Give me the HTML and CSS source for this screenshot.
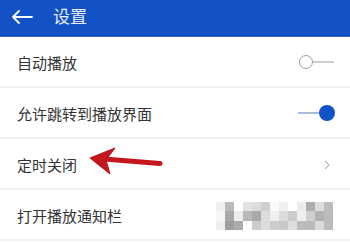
FILE: index.html
```html
<!DOCTYPE html>
<html lang="zh">
<head>
<meta charset="utf-8">
<link rel="stylesheet" href="styles.css">
</head>
<body>
<div class="page">
  <header class="topbar">
    <svg class="back" width="22" height="14" viewBox="0 0 22 14">
      <path d="M21 7H2M8 1L2 7l6 6" fill="none" stroke="#fff" stroke-width="1.8" stroke-linecap="round" stroke-linejoin="round"/>
    </svg>
    <span class="title">设置</span>
  </header>
  <div class="row">
    <span class="label">自动播放</span>
    <span class="toggle off"><span class="knob"></span><span class="track"></span></span>
  </div>
  <div class="row">
    <span class="label">允许跳转到播放界面</span>
    <span class="toggle on"><span class="track"></span><span class="knob"></span></span>
  </div>
  <div class="row">
    <span class="label">定时关闭</span>
    <svg class="chev" width="6" height="10" viewBox="0 0 6 10"><path d="M1 1l4 4-4 4" fill="none" stroke="#bdbdbd" stroke-width="1.2"/></svg>
  </div>
  <div class="row">
    <span class="label">打开播放通知栏</span>
    <div class="mosaic">
      <i style="background:#f0f0f0"></i><i style="background:#b9b9b9"></i><i style="background:#fff"></i><i style="background:#e2e2e2"></i><i style="background:#dcdcdc"></i><i style="background:#cfcfcf"></i><i style="background:#fafafa"></i><i style="background:#f0f0f0"></i><i style="background:#fff"></i><i style="background:#ececec"></i><i style="background:#adadad"></i><i style="background:#dedede"></i><i style="background:#bdbdbd"></i>
      <i style="background:#f6f6f6"></i><i style="background:#a9a9a9"></i><i style="background:#ececec"></i><i style="background:#b8b8b8"></i><i style="background:#aaaaaa"></i><i style="background:#dddddd"></i><i style="background:#efefef"></i><i style="background:#dcdcdc"></i><i style="background:#cccccc"></i><i style="background:#eeeeee"></i><i style="background:#cfcfcf"></i><i style="background:#b2b2b2"></i><i style="background:#bbbbbb"></i>
      <i style="background:#eeeeee"></i><i style="background:#9e9e9e"></i><i style="background:#acacac"></i><i style="background:#fdfdfd"></i><i style="background:#cccccc"></i><i style="background:#dcdcdc"></i><i style="background:#cdcdcd"></i><i style="background:#c9c9c9"></i><i style="background:#dddddd"></i><i style="background:#bcbcbc"></i><i style="background:#bababa"></i><i style="background:#dadada"></i><i style="background:#bcbcbc"></i>
    </div>
  </div>
  <svg class="redarrow" width="80" height="34" viewBox="85 145 80 34">
    <path d="M160 163.5L104 159" fill="none" stroke="#c4161c" stroke-width="5" stroke-linecap="round"/>
    <path d="M90 158L115 148L106 160L110 174Z" fill="#c4161c" stroke="#b51218" stroke-width="1" stroke-linejoin="round"/>
  </svg>
</div>
</body>
</html>
```
FILE: styles.css
```css
html, body {
  margin: 0;
  padding: 0;
  background: #fff;
}
.page {
  position: relative;
  width: 350px;
  height: 242px;
  overflow: hidden;
  font-family: "Noto Sans CJK SC", "Noto Sans", sans-serif;
}
.topbar {
  height: 36px;
  background: #1252c4;
  border-bottom: 1px solid #3a68b6;
  display: flex;
  align-items: center;
  padding-left: 11px;
  box-sizing: content-box;
}
.back {
  display: block;
  margin-right: 20px;
  margin-top: -3px;
}
.title {
  color: #e9effb;
  font-size: 17px;
  line-height: 20px;
  margin-top: -5px;
}
.row {
  height: 49px;
  border-bottom: 2px solid #f1f1f1;
  display: flex;
  align-items: center;
  justify-content: space-between;
  padding: 0 15px 0 17px;
  box-sizing: content-box;
}
.label {
  font-size: 15px;
  color: #333;
  line-height: 20px;
  margin-top: 3px;
}
.toggle {
  display: flex;
  align-items: center;
  width: 36px;
}
.toggle.off .knob {
  width: 12px;
  height: 12px;
  border: 1.5px solid #9e9e9e;
  border-radius: 50%;
  background: #fff;
  flex: none;
}
.toggle.off .track {
  flex: 1;
  height: 2px;
  background: #cfcfcf;
  margin-right: 1px;
}
.toggle.on .track {
  flex: 1;
  height: 2px;
  background: #a9b9d9;
  margin-left: -1px;
}
.toggle.on .knob {
  width: 16px;
  height: 16px;
  border-radius: 50%;
  background: #1152c8;
  flex: none;
}
.chev {
  display: block;
  margin-right: 5px;
  margin-top: 2px;
}
.mosaic {
  display: grid;
  grid-template-columns: repeat(13, 9px);
  grid-template-rows: repeat(3, 9.5px);
  margin-top: 3px;
  margin-right: 2px;
}
.mosaic i {
  display: block;
}
.redarrow {
  position: absolute;
  left: 85px;
  top: 145px;
}
```
